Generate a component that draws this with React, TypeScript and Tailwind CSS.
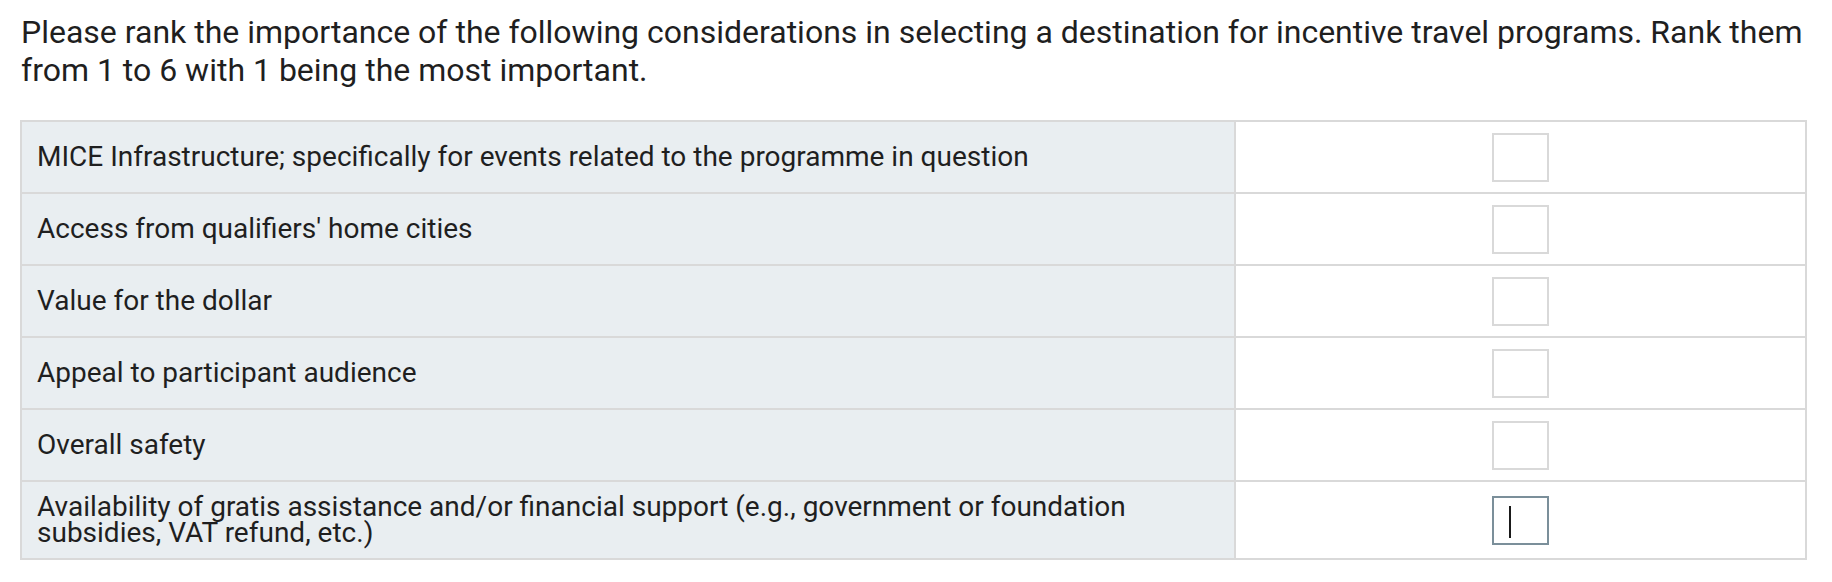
const ITEMS = [
  "MICE Infrastructure; specifically for events related to the programme in question",
  "Access from qualifiers' home cities",
  "Value for the dollar",
  "Appeal to participant audience",
  "Overall safety",
  "Availability of gratis assistance and/or financial support (e.g., government or foundation subsidies, VAT refund, etc.)",
];

function RankBox({ focused }: { focused: boolean }) {
  return (
    <div
      className={`relative h-[49px] w-[57px] border-2 bg-white ${
        focused ? "border-[#7b8f9a]" : "border-[#d9d9d9]"
      }`}
    >
      {focused && (
        <span className="absolute left-[15px] top-[8px] h-[32px] w-[2px] bg-[#1a1a1a]" />
      )}
    </div>
  );
}

export default function App() {
  return (
    <div className="min-h-[582px] bg-white px-[20px] pt-[13px] font-['Roboto',sans-serif] text-[#1f1f1f]">
      <p className="pl-[1px] text-[32px] leading-[38px]">
        Please rank the importance of the following considerations in selecting
        a destination for incentive travel programs. Rank them from 1 to 6 with
        1 being the most important.
      </p>

      <div className="mt-[31px] w-[1787px] border-2 border-[#d9d9d9]">
        {ITEMS.map((item, i) => {
          const last = i === ITEMS.length - 1;
          return (
            <div
              key={item}
              className={`grid grid-cols-[1214px_1fr] ${
                last ? "h-[76px]" : "h-[72px] border-b-2 border-[#d9d9d9]"
              }`}
            >
              <div className="flex items-center border-r-2 border-[#d9d9d9] bg-[#e9eef1] pl-[15px] pr-[80px]">
                <span className="text-[28px] leading-[26px]">{item}</span>
              </div>
              <div className="flex items-center justify-center">
                <RankBox focused={last} />
              </div>
            </div>
          );
        })}
      </div>
    </div>
  );
}
